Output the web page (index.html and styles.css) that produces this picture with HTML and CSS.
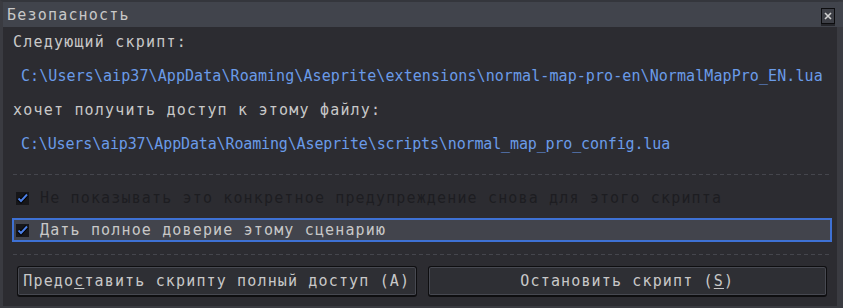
FILE: index.html
```html
<!DOCTYPE html>
<html lang="ru">
<head>
    <meta charset="UTF-8">
    <title>Безопасность</title>
    <link rel="stylesheet" href="styles.css">
</head>
<body>
    <div class="window">
        <div class="titlebar">
            <span class="title">Безопасность</span>
            <span class="close">
                <svg width="8" height="8" viewBox="0 0 8 8"><path d="M1 1L7 7M7 1L1 7" stroke="#d0d0d0" stroke-width="1.6"/></svg>
            </span>
        </div>

        <div class="content">
            <div class="label">Следующий скрипт:</div>
            <div class="path path-long">C:\Users\aip37\AppData\Roaming\Aseprite\extensions\normal-map-pro-en\NormalMapPro_EN.lua</div>
            <div class="label">хочет получить доступ к этому файлу:</div>
            <div class="path">C:\Users\aip37\AppData\Roaming\Aseprite\scripts\normal_map_pro_config.lua</div>

            <div class="sep"></div>

            <div class="check disabled">
                <span class="box">
                    <svg width="13" height="13" viewBox="0 0 13 13"><path d="M2.5 6.5L5 9L11 2.5" fill="none" stroke="#000" stroke-width="4"/><path d="M2.5 6.5L5 9L11 2.5" fill="none" stroke="#4c7fe4" stroke-width="2"/></svg>
                </span>
                Не показывать это конкретное предупреждение снова для этого скрипта
            </div>
            <div class="check focused">
                <span class="box">
                    <svg width="13" height="13" viewBox="0 0 13 13"><path d="M2.5 6.5L5 9L11 2.5" fill="none" stroke="#000" stroke-width="4"/><path d="M2.5 6.5L5 9L11 2.5" fill="none" stroke="#4c7fe4" stroke-width="2"/></svg>
                </span>
                Дать полное доверие этому сценарию
            </div>

            <div class="sep sep-low"></div>

            <div class="buttons">
                <button>Предо<u>с</u>тавить скрипту полный доступ (A)</button>
                <button>Остановить скрипт (<u>S</u>)</button>
            </div>
        </div>
    </div>
</body>
</html>
```

FILE: styles.css
```css
/* --- okno v stile Aseprite --- */
body {
    margin: 0;
    background-color: #2c2c31;
    font-family: "DejaVu Sans Mono", "Liberation Mono", monospace;
    font-size: 15px;
    color: #c8c8c8;
}

.window {
    width: 843px;
    height: 308px;
    box-sizing: border-box;
    border-top: 2px solid #34363c;
    border-left: 3px solid #3a3b41;
    border-right: 6px solid #3a3b41;
    border-bottom: 2px solid #3a3b41;
    background-color: #2c2c31;
    display: flex;
    flex-direction: column;
}

.titlebar {
    height: 25px;
    background-color: #41444c;
    display: flex;
    align-items: center;
    margin-right: -6px;
    padding: 0 8px 0 4px;
}

.title {
    letter-spacing: 1.2px;
}

.close {
    margin-left: auto;
    width: 14px;
    height: 16px;
    box-sizing: border-box;
    border: 1px solid #0d0d0f;
    background-color: #3d3f46;
    display: flex;
    align-items: center;
    justify-content: center;
    box-shadow: 0 2px 0 #25262b;
    margin-top: 3px;
}

.content {
    padding: 5px 5px 0 10px;
    display: flex;
    flex-direction: column;
}

.label {
    height: 20px;
    line-height: 20px;
    letter-spacing: 1.2px;
    margin-bottom: 14px;
}

.path {
    height: 20px;
    line-height: 20px;
    color: #6a9be8;
    margin-left: 8px;
    margin-bottom: 14px;
    letter-spacing: -0.14px;
    white-space: nowrap;
}

.path-long {
    letter-spacing: 0.08px;
}

.sep {
    height: 1px;
    margin-top: 6px;
    background: repeating-linear-gradient(to right, #45464d 0 4px, transparent 4px 7px);
}

.check {
    height: 20px;
    line-height: 20px;
    display: flex;
    align-items: center;
    letter-spacing: 1.15px;
    white-space: nowrap;
    padding-left: 3px;
}

.check.disabled {
    margin-top: 13px;
    color: #1d1d21;
}

.check.focused {
    margin: 10px 0 0 -1px;
    border: 2px solid #3e71d4;
    background-color: #42444c;
    padding-left: 2px;
}

.box {
    width: 13px;
    height: 13px;
    background-color: #161619;
    margin-right: 11px;
    display: block;
}

.box svg {
    display: block;
}

.sep-low {
    margin-top: 12px;
}

.buttons {
    display: flex;
    gap: 11px;
    margin: 11px 5px 0 4px;
}

button {
    flex: 1;
    height: 31px;
    font-family: inherit;
    font-size: 15px;
    letter-spacing: 1.15px;
    color: #c8c8c8;
    background-color: #2e2f34;
    border: 1px solid #0e0e10;
    border-bottom-width: 2px;
    border-radius: 3px;
    box-shadow: inset 0 0 0 1px #474951;
    padding: 0;
}

u {
    text-decoration: underline;
    text-underline-offset: 2px;
}
```
